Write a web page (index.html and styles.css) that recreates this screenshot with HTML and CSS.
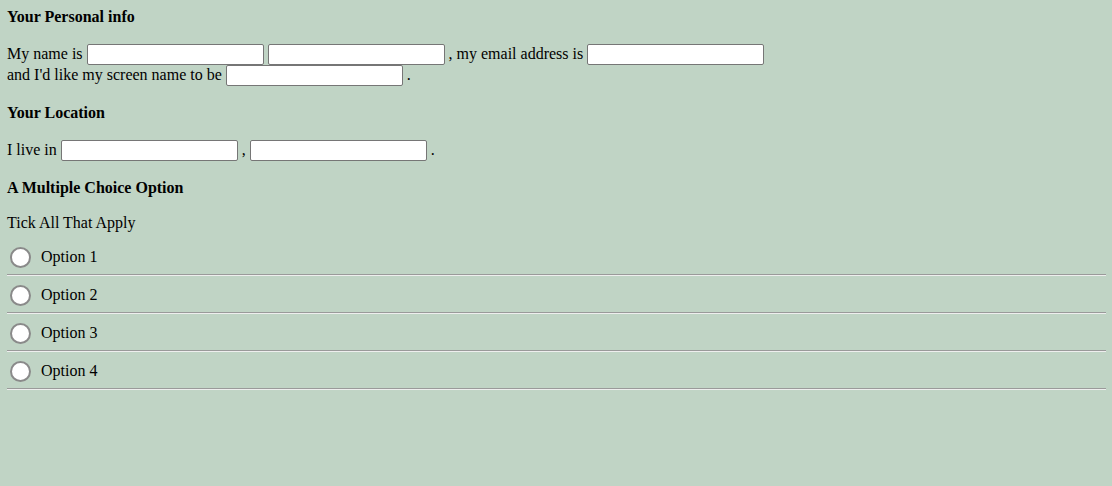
FILE: index.html
```html
<!DOCTYPE html>
<html>
<head>
<meta charset="utf-8">
<link rel="stylesheet" href="styles.css">
</head>
<body>
<form class="form">
  <h4 class="heading heading-first">Your Personal info</h4>
  <p class="sentence">My name is <input class="field" type="text"> <input class="field" type="text"> , my email address is <input class="field" type="text"><br>and I'd like my screen name to be <input class="field" type="text"> .</p>
  <h4 class="heading">Your Location</h4>
  <p class="sentence">I live in <input class="field" type="text"> , <input class="field" type="text"> .</p>
  <h4 class="heading">A Multiple Choice Option</h4>
  <p class="tick">Tick All That Apply</p>
  <div class="options">
    <label class="option"><input class="radio" type="radio" name="opt"><span class="option-text">Option 1</span></label>
    <hr class="rule">
    <label class="option"><input class="radio" type="radio" name="opt"><span class="option-text">Option 2</span></label>
    <hr class="rule">
    <label class="option"><input class="radio" type="radio" name="opt"><span class="option-text">Option 3</span></label>
    <hr class="rule">
    <label class="option"><input class="radio" type="radio" name="opt"><span class="option-text">Option 4</span></label>
    <hr class="rule">
  </div>
</form>
</body>
</html>
```
FILE: styles.css
```css
html, body {
  background: #c0d4c5;
}
body {
  margin: 0 6px 0 7px;
  padding-top: 8px;
  font-family: "Liberation Serif", "Times New Roman", serif;
  font-size: 16px;
  color: #000;
}
.form {
  margin: 0;
}
.heading {
  margin: 18px 0 18px;
  font-size: 16px;
  font-weight: bold;
  line-height: 18px;
}
.heading-first {
  margin-top: 0;
}
.sentence {
  margin: 0;
  line-height: 20px;
}
.field {
  box-sizing: border-box;
  width: 177px;
  height: 21px;
  margin: 0;
  padding: 1px 2px;
  border: 1px solid #767676;
  border-radius: 2px;
  background: #fff;
  vertical-align: top;
  font: 13.33px "Liberation Sans", Arial, sans-serif;
}
.tick {
  margin: 0;
  margin-top: -1px;
  line-height: 18px;
}
.options {
  margin-top: 6px;
}
.option {
  display: flex;
  align-items: center;
  height: 36px;
  box-sizing: border-box;
  padding: 2px 0 0 3px;
}
.radio {
  appearance: none;
  -webkit-appearance: none;
  box-sizing: border-box;
  width: 21px;
  height: 21px;
  margin: 0 10px 0 0;
  border: 2px solid #8a8a8a;
  border-radius: 50%;
  background: #fff;
}
.option-text {
  line-height: 16px;
  margin-bottom: 1px;
}
.rule {
  margin: 0;
  height: 0;
  border: 0;
  border-top: 1px solid #9a9a9a;
  border-bottom: 1px solid #eeeeee;
}
```
